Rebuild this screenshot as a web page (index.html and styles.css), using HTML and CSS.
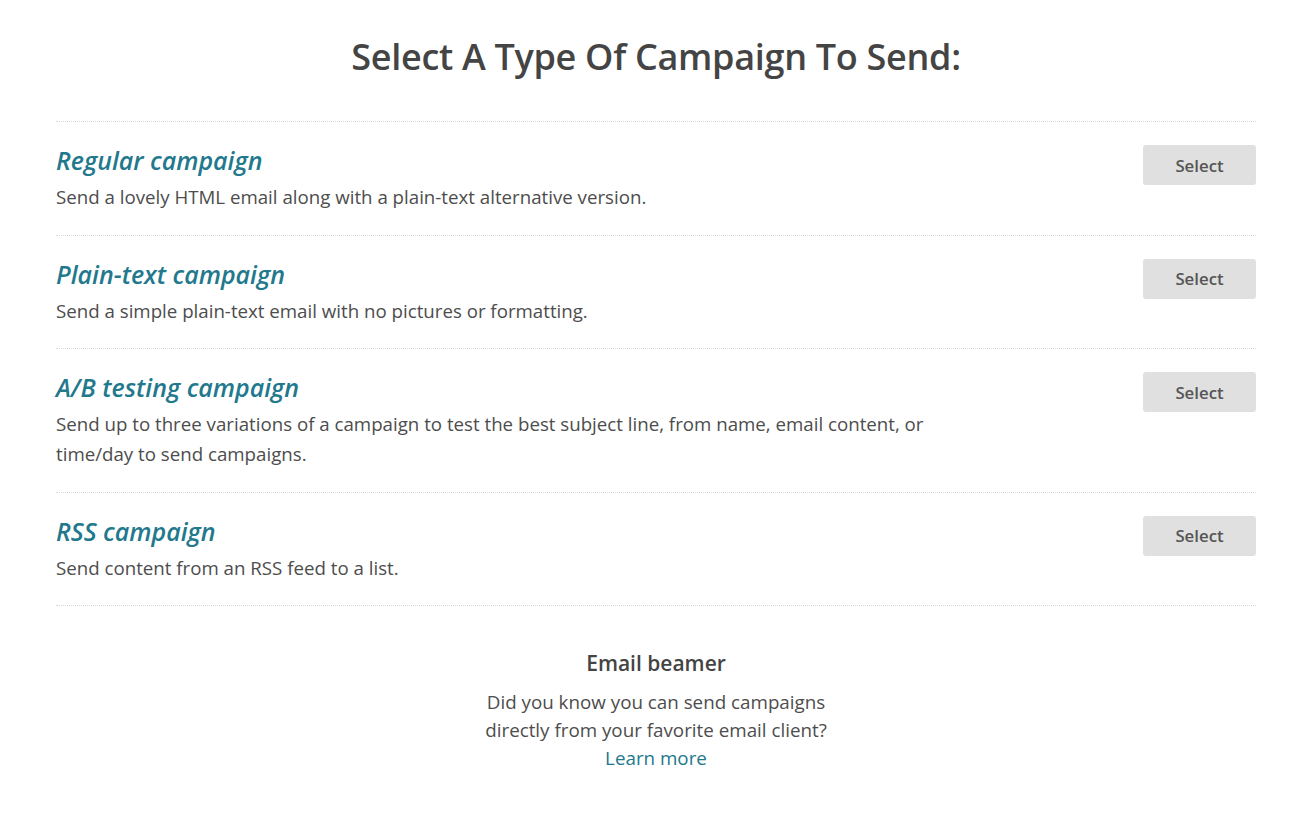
FILE: index.html
```html
<!DOCTYPE html>
<html>
<head>
<meta charset="utf-8">
<link rel="stylesheet" href="styles.css">
</head>
<body>
<div class="page">
  <h1 class="page-title">Select A Type Of Campaign To Send:</h1>
  <ul class="types">
    <li class="type">
      <div class="type-info">
        <h2 class="type-name">Regular campaign</h2>
        <p class="type-desc">Send a lovely HTML email along with a plain-text alternative version.</p>
      </div>
      <button class="btn">Select</button>
    </li>
    <li class="type">
      <div class="type-info">
        <h2 class="type-name">Plain-text campaign</h2>
        <p class="type-desc">Send a simple plain-text email with no pictures or formatting.</p>
      </div>
      <button class="btn">Select</button>
    </li>
    <li class="type">
      <div class="type-info">
        <h2 class="type-name">A/B testing campaign</h2>
        <p class="type-desc">Send up to three variations of a campaign to test the best subject line, from name, email content, or time/day to send campaigns.</p>
      </div>
      <button class="btn">Select</button>
    </li>
    <li class="type">
      <div class="type-info">
        <h2 class="type-name">RSS campaign</h2>
        <p class="type-desc">Send content from an RSS feed to a list.</p>
      </div>
      <button class="btn">Select</button>
    </li>
  </ul>
  <div class="beamer">
    <h3 class="beamer-title">Email beamer</h3>
    <p class="beamer-text">Did you know you can send campaigns<br>directly from your favorite email client?<br><a href="#" class="beamer-link">Learn more</a></p>
  </div>
</div>
</body>
</html>
```
FILE: styles.css
```css
* { box-sizing: border-box; }
html, body { margin: 0; padding: 0; background: #fff; }
body { font-family: "Open Sans", "Liberation Sans", sans-serif; color: #4d4d4d; }
.page { width: 1200px; margin: 0 0 0 56px; padding-top: 34px; }
.page-title {
  margin: 0 0 41px;
  text-align: center;
  font-size: 36px;
  line-height: 46px;
  font-weight: 600;
  color: #444;
  letter-spacing: -0.3px;
}
.types { list-style: none; margin: 0; padding: 0; border-top: 1px dotted #d8d8d8; }
.type {
  display: flex;
  justify-content: space-between;
  align-items: flex-start;
  padding: 22px 0 22.5px;
  border-bottom: 1px dotted #d8d8d8;
}
.type-info { width: 880px; }
.type-name {
  margin: 0 0 6px;
  font-size: 25px;
  line-height: 32px;
  font-weight: 600;
  font-style: italic;
  color: #22788c;
}
.type-desc { margin: 0; font-size: 18.7px; line-height: 30px; color: #4d4d4d; }
.btn {
  margin-top: 1px;
  width: 113px;
  height: 40px;
  border: 0;
  border-radius: 3px;
  background: #e0e0e0;
  font-family: inherit;
  font-size: 16.8px;
  font-weight: 600;
  color: #555;
  cursor: pointer;
}
.beamer { text-align: center; padding-top: 44px; }
.beamer-title { margin: 0 0 12px; font-size: 21px; line-height: 26px; font-weight: 600; color: #444; }
.beamer-text { margin: 0; font-size: 18.8px; line-height: 28px; color: #4d4d4d; }
.beamer-link { color: #22788c; text-decoration: none; }
```
